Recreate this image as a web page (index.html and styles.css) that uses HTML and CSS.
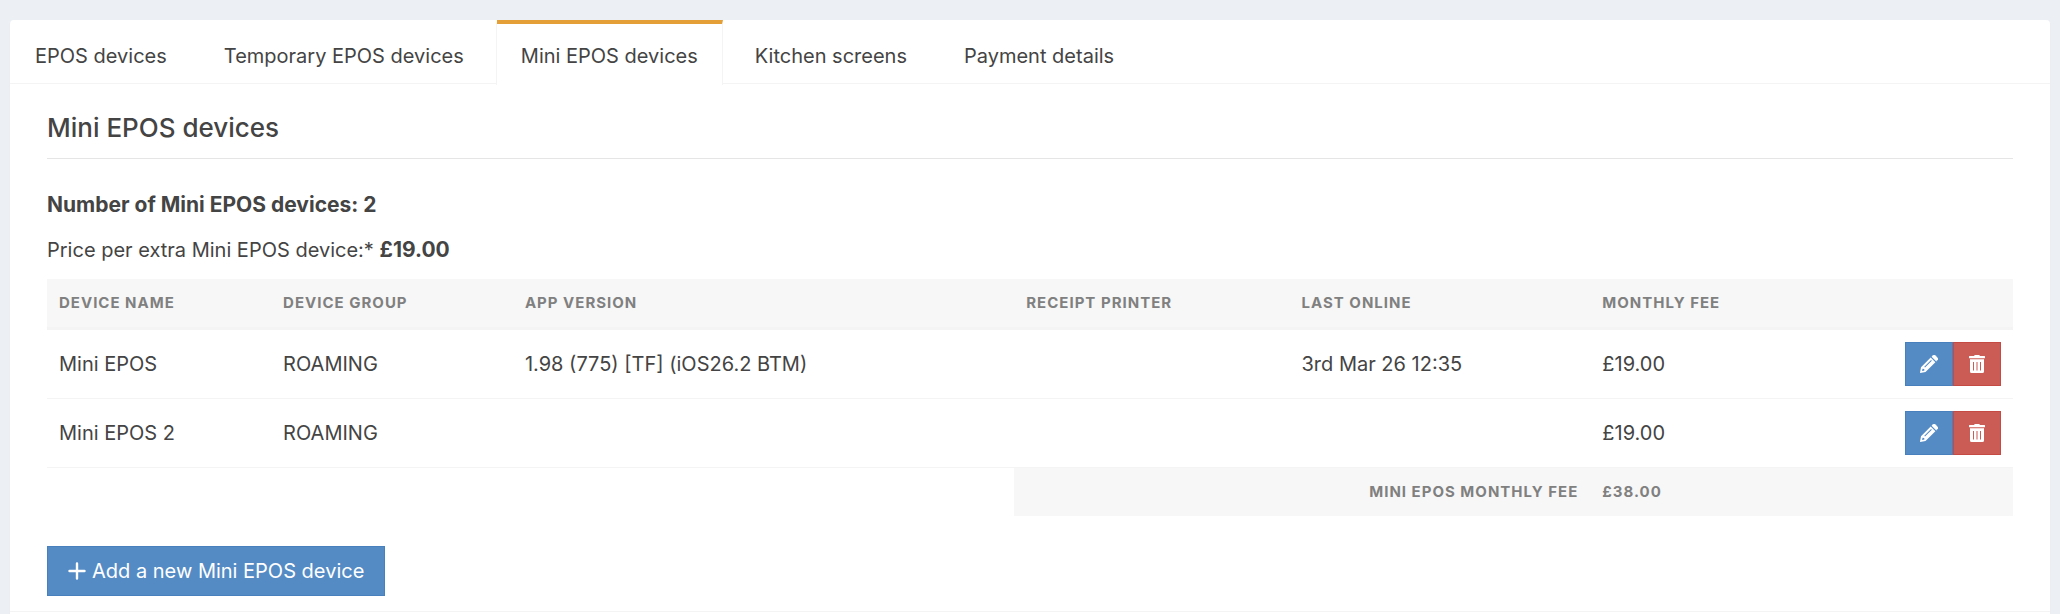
FILE: index.html
```
<!DOCTYPE html>
<html lang="en">
<head>
  <meta charset="UTF-8">
  <meta name="viewport" content="width=device-width, initial-scale=1.0">
  <title>Mini EPOS devices</title>
  <link rel="stylesheet" href="styles.css">
</head>
<body>

  <!-- Shared icons -->
  <svg class="icon-defs" aria-hidden="true">
    <symbol id="icon-pencil" viewBox="0 0 18 18">
      <path fill-rule="evenodd" d="M10.7 2.5 15.4 7.2 5.5 17 0.3 18 0 17.7 1 12.3zM11.1 5 4.3 11.8 5 12.5 11.8 5.7zM2.5 13.8 2.1 15.7 2.6 16.1 4.4 15.6 4.2 14.1z"/>
      <path d="M11.6 1.7 12.7.6a2 2 0 0 1 2.8 0l1.900 1.900a2 2 0 0 1 0 2.800l-1.100 1.100z"/>
    </symbol>
    <symbol id="icon-trash" viewBox="0 0 16 18">
      <path d="M.5 1h4.4L5.6.2Q5.8 0 6.1 0h3.8q.3 0 .5.2l.7.8h4.4q.5 0 .5.5v1.2q0 .5-.5.5H.5Q0 3.2 0 2.7V1.5Q0 1 .5 1z"/>
      <path fill-rule="evenodd" d="M1 4.3h14v12.2q0 1.500-1.500 1.500h-11Q1 18 1 16.500zM4 7v8.500h1V7zM7.500 7v8.500h1V7zM11 7v8.500h1V7z"/>
    </symbol>
    <symbol id="icon-plus" viewBox="0 0 18 18">
      <path d="M9 1.500v15M1.500 9h15" fill="none" stroke="currentColor" stroke-width="2.400" stroke-linecap="round"/>
    </symbol>
  </svg>

  <div class="panel">
    <!-- Tabs -->
    <nav class="tabs">
      <a href="#epos">EPOS devices</a>
      <a href="#temporary">Temporary EPOS devices</a>
      <a href="#mini" class="active">Mini EPOS devices</a>
      <a href="#kitchen">Kitchen screens</a>
      <a href="#payment">Payment details</a>
    </nav>

    <div class="tab-content" id="mini">
      <h1>Mini EPOS devices</h1>
      <div class="summary">
        <p><strong>Number of Mini EPOS devices: 2</strong></p>
        <p>Price per extra Mini EPOS device:* <strong>£19.00</strong></p>
      </div>

      <table class="devices">
        <colgroup>
          <col class="col-name">
          <col class="col-group">
          <col class="col-version">
          <col class="col-printer">
          <col class="col-online">
          <col class="col-fee">
          <col>
        </colgroup>
        <thead>
          <tr>
            <th>Device name</th>
            <th>Device group</th>
            <th>App version</th>
            <th>Receipt printer</th>
            <th>Last online</th>
            <th>Monthly fee</th>
            <th></th>
          </tr>
        </thead>
        <tbody>
          <tr>
            <td>Mini EPOS</td>
            <td>ROAMING</td>
            <td>1.98 (775) [TF] (iOS26.2 BTM)</td>
            <td></td>
            <td>3rd Mar 26 12:35</td>
            <td>£19.00</td>
            <td>
              <div class="actions">
                <button type="button" class="btn btn-primary" aria-label="Edit"><svg class="icon"><use href="#icon-pencil"/></svg></button>
                <button type="button" class="btn btn-danger" aria-label="Delete"><svg class="icon"><use href="#icon-trash"/></svg></button>
              </div>
            </td>
          </tr>
          <tr>
            <td>Mini EPOS 2</td>
            <td>ROAMING</td>
            <td></td>
            <td></td>
            <td></td>
            <td>£19.00</td>
            <td>
              <div class="actions">
                <button type="button" class="btn btn-primary" aria-label="Edit"><svg class="icon"><use href="#icon-pencil"/></svg></button>
                <button type="button" class="btn btn-danger" aria-label="Delete"><svg class="icon"><use href="#icon-trash"/></svg></button>
              </div>
            </td>
          </tr>
        </tbody>
        <tfoot>
          <tr>
            <td colspan="3"></td>
            <th colspan="2" class="total-label">Mini EPOS monthly fee</th>
            <th>£38.00</th>
            <th></th>
          </tr>
        </tfoot>
      </table>

      <button type="button" class="btn btn-primary btn-add"><svg class="icon"><use href="#icon-plus"/></svg>Add a new Mini EPOS device</button>
    </div>

    <div class="panel-footer"></div>
  </div>

</body>
</html>
```
FILE: styles.css
```
* {
  box-sizing: border-box;
}

body {
  margin: 0;
  padding: 20px 10px 0;
  min-height: 100vh;
  display: flex;
  flex-direction: column;
  background-color: #ecf0f5;
  color: #444;
  font-family: Inter, "Liberation Sans", sans-serif;
  font-size: 20px;
  line-height: 28px;
}

.icon-defs {
  display: none;
}

.icon {
  width: 18px;
  height: 18px;
  fill: currentColor;
}

.panel {
  display: flex;
  flex-direction: column;
  flex-grow: 1;
  background-color: #fff;
  border-radius: 4px 4px 0 0;
  box-shadow: 0 1px 1px rgba(0, 0, 0, 0.1);
}

/* Tabs */
.tabs {
  display: flex;
  gap: 7px;
  height: 64px;
  border-bottom: 1px solid #f4f4f4;
}

.tabs a {
  height: 65px;
  padding: 18px 24px 0;
  border: 1px solid transparent;
  border-top: 4px solid transparent;
  border-bottom: 0;
  color: #444;
  text-decoration: none;
}

.tabs a.active {
  background:
    linear-gradient(#e49f37, #e49f37) top / 100% 4px no-repeat border-box,
    #fff;
  border-left-color: #f4f4f4;
  border-right-color: #f4f4f4;
}

.tab-content {
  flex-grow: 1;
  padding: 26px 37px 15px;
}

h1 {
  margin: 0 0 32px;
  padding-bottom: 12px;
  border-bottom: 1px solid #e5e5e5;
  font-size: 26px;
  font-weight: 500;
  line-height: 36px;
}

.summary {
  display: flex;
  flex-direction: column;
  gap: 17px;
  margin-bottom: 15px;
}

.summary p {
  margin: 0;
}

.summary strong {
  font-size: 21px;
}

/* Devices table */
.devices {
  width: 100%;
  table-layout: fixed;
  border-collapse: separate;
  border-spacing: 0;
}

.col-name { width: 11.4%; }
.col-group { width: 12.3%; }
.col-version { width: 25.5%; }
.col-printer { width: 14%; }
.col-online { width: 15.3%; }
.col-fee { width: 11.5%; }

.devices th,
.devices td {
  padding: 12px;
  text-align: left;
}

.devices th {
  background-color: #f7f7f7;
  color: #808080;
  font-size: 15px;
  font-weight: 700;
  line-height: 24px;
  letter-spacing: 1px;
  text-transform: uppercase;
}

.devices thead th {
  border-bottom: 3px solid #f4f4f4;
}

.devices tbody td {
  border-bottom: 1px solid #f4f4f4;
}

.devices .total-label {
  text-align: right;
}

.actions {
  display: flex;
  justify-content: flex-end;
}

/* Buttons */
.btn {
  display: flex;
  align-items: center;
  justify-content: center;
  border: 1px solid;
  color: #fff;
  font: inherit;
  cursor: pointer;
}

.actions .btn {
  width: 48px;
  height: 44px;
  padding: 0;
}

.btn-primary {
  background-color: #548bc5;
  border-color: #4780bd;
}

.btn-danger {
  background-color: #cb5b55;
  border-color: #c54a44;
}

.btn-add {
  gap: 6px;
  margin-top: 30px;
  padding: 10px 20px;
}

.panel-footer {
  height: 3px;
  border-top: 1px solid #f4f4f4;
}
```
